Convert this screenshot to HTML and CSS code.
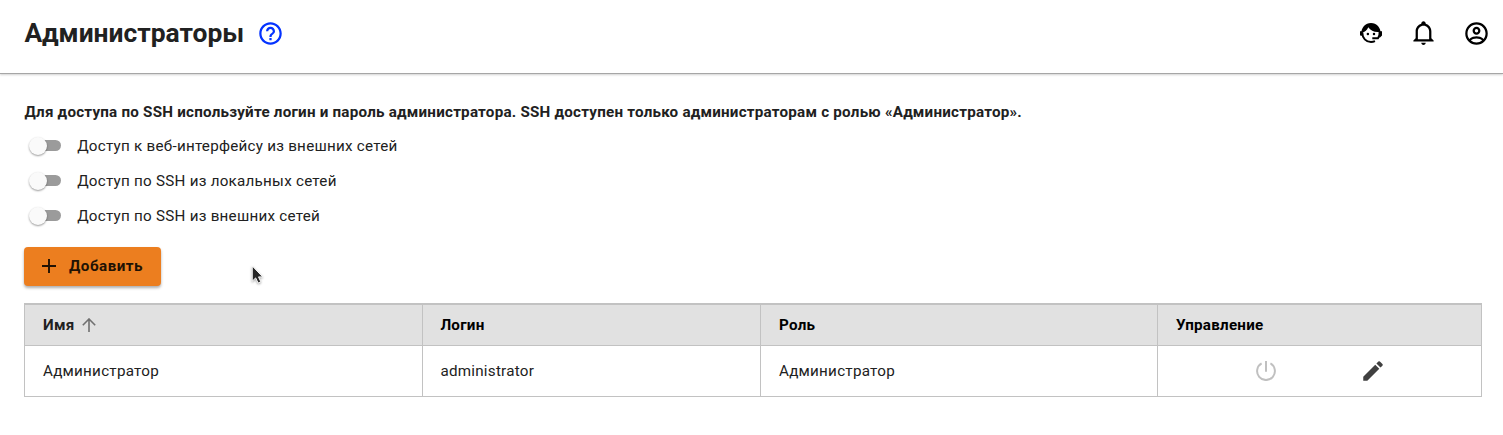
FILE: index.html
```html
<!DOCTYPE html>
<html lang="ru">
<head>
<meta charset="utf-8">
<title>Администраторы</title>
<link rel="stylesheet" href="styles.css">
</head>
<body>
<header class="topbar">
  <h1 class="title">Администраторы</h1>
  <svg class="icon help" viewBox="0 0 24 24"><path d="M11 18h2v-2h-2v2zm1-16C6.48 2 2 6.480 2 12s4.480 10 10 10 10-4.480 10-10S17.520 2 12 2zm0 18c-4.410 0-8-3.590-8-8s3.590-8 8-8 8 3.590 8 8-3.590 8-8 8zm0-14c-2.210 0-4 1.790-4 4h2c0-1.100.9-2 2-2s2 .9 2 2c0 2-3 1.750-3 5h2c0-2.250 3-2.500 3-5 0-2.210-1.790-4-4-4z"/></svg>
  <div class="actions">
    <svg class="icon agent" viewBox="0 0 26 26"><path d="M3.300 14C3 7.500 7.500 3 13 3S23 7.500 22.700 14L20.700 12C16.500 12.400 12.500 10.600 10.300 7.300C9 10.200 7 11.700 4.800 12.400Z"/><path class="line" d="M4.300 12.500C4.300 18 8 22 13 22C14.600 22 15.800 21.700 17 21.200M21.600 11.500C21.800 14.500 21.300 16.500 20 18.300H14.300"/><path d="M2 11.300H4.500V15.700H2.600L2 15ZM21.500 11.300H24V15.500L21.500 18Z"/><circle cx="9.900" cy="13.900" r="1.250"/><circle cx="16" cy="13.900" r="1.250"/></svg>
    <svg class="icon bell" viewBox="0 0 24 24"><path d="M10 21H14C14 22.1 13.1 23 12 23S10 22.1 10 21M21 19V20H3V19L5 17V11C5 7.9 7 5.200 10 4.300V4C10 2.900 10.900 2 12 2S14 2.900 14 4V4.300C17 5.200 19 7.900 19 11V17L21 19M17 11C17 8.200 14.800 6 12 6S7 8.200 7 11V18H17V11Z"/></svg>
    <svg class="icon" viewBox="0 0 24 24"><path d="M12,2A10,10 0 0,0 2,12A10,10 0 0,0 12,22A10,10 0 0,0 22,12A10,10 0 0,0 12,2M7.070,18.280C7.500,17.380 10.120,16.500 12,16.500C13.880,16.500 16.500,17.380 16.930,18.280C15.570,19.360 13.860,20 12,20C10.140,20 8.430,19.360 7.070,18.280M18.360,16.830C16.930,15.090 13.460,14.500 12,14.500C10.540,14.500 7.070,15.090 5.640,16.830C4.620,15.500 4,13.820 4,12C4,7.590 7.590,4 12,4C16.410,4 20,7.590 20,12C20,13.820 19.380,15.500 18.360,16.830M12,6C10.060,6 8.500,7.560 8.500,9.500C8.500,11.440 10.060,13 12,13C13.940,13 15.500,11.440 15.500,9.500C15.500,7.560 13.940,6 12,6M12,11A1.500,1.500 0 0,1 10.500,9.500A1.500,1.500 0 0,1 12,8A1.500,1.500 0 0,1 13.500,9.500A1.500,1.500 0 0,1 12,11Z"/></svg>
  </div>
</header>
<main class="content">
  <p class="notice">Для доступа по SSH используйте логин и пароль администратора. SSH доступен только администраторам с ролью «Администратор».</p>
  <div class="toggles">
    <label class="toggle"><span class="track"><span class="thumb"></span></span><span>Доступ к веб-интерфейсу из внешних сетей</span></label>
    <label class="toggle"><span class="track"><span class="thumb"></span></span><span>Доступ по SSH из локальных сетей</span></label>
    <label class="toggle"><span class="track"><span class="thumb"></span></span><span>Доступ по SSH из внешних сетей</span></label>
  </div>
  <button class="add"><svg class="plus" viewBox="0 0 14 14"><path d="M7 0V14M0 7H14"/></svg><span>Добавить</span></button>
  <table class="grid">
    <colgroup><col class="c1"><col class="c2"><col class="c3"><col class="c4"></colgroup>
    <thead>
      <tr><th class="sorted">Имя<svg class="sort" viewBox="0 0 14 14"><path d="M7 14V1.200M.8 7.200L7 1L13.200 7.200"/></svg></th><th>Логин</th><th>Роль</th><th>Управление</th></tr>
    </thead>
    <tbody>
      <tr><td>Администратор</td><td>administrator</td><td>Администратор</td>
        <td class="controls"><div class="buttons">
          <svg class="power" viewBox="0 0 20 20"><path d="M10 0V10.700M5.600 2.400A8.900 8.900 0 1 0 14.400 2.400"/></svg>
          <svg class="edit" viewBox="0 0 24 24"><path d="M3 17.250V21h3.750L17.810 9.940l-3.750-3.750L3 17.250zM20.710 7.040a1 1 0 0 0 0-1.410l-2.340-2.340a1 1 0 0 0-1.410 0l-1.830 1.830 3.750 3.750 1.830-1.830z"/></svg>
        </div></td></tr>
    </tbody>
  </table>
</main>
<svg class="cursor" viewBox="0 0 12 20"><path d="M1 1V17L4.600 13.600L7.200 19L10 17.700L7.600 12.500H12Z"/></svg>
</body>
</html>
```

FILE: styles.css
```css
* { box-sizing: border-box; }
body {
  margin: 0;
  height: 435px;
  overflow: hidden;
  background: #fff;
  color: #212121;
  font-family: Roboto, "Noto Sans", sans-serif;
  font-size: 15.2px;
  letter-spacing: 0.25px;
}
.topbar {
  display: flex;
  align-items: center;
  height: 74px;
  padding: 0 13px 7px 24.4px;
  border-bottom: 1px solid #a6a6a6;
  box-shadow: 0 1px 2px rgba(0, 0, 0, 0.18);
}
.title { margin: 0; font-size: 26.4px; font-weight: 700; line-height: 32px; letter-spacing: 0; }
.icon { width: 27px; height: 27px; fill: #000; flex: none; }
.help { margin-left: 12.6px; fill: #0433ff; }
.actions { display: flex; align-items: center; gap: 26px; margin-left: auto; }
.agent { width: 26px; height: 26px; }
.agent .line { fill: none; stroke: #000; stroke-width: 1.9; }
.bell { margin-top: -1px; margin-left: -0.5px; margin-right: 0.5px; }
.content { padding: 28px 21px 0 24px; }
.notice { margin: 0 0 0 0.4px; font-weight: 700; line-height: 20px; letter-spacing: 0.225px; }
.toggles { display: flex; flex-direction: column; padding: 6px 0 0 7px; }
.toggle { display: flex; align-items: center; gap: 16.2px; height: 35px; }
.track { position: relative; width: 30px; height: 11px; border-radius: 6px; background: #9b9b9b; }
.thumb {
  position: absolute;
  left: -2.5px;
  top: -3.5px;
  width: 18px;
  height: 18px;
  border-radius: 50%;
  background: #fafafa;
  box-shadow: 0 1px 2px rgba(0, 0, 0, 0.4);
}
.add {
  display: flex;
  align-items: center;
  gap: 13px;
  width: 137px;
  height: 39px;
  margin: 14px 0 17px;
  padding: 0 0 1px 18px;
  border: 0;
  border-radius: 4px;
  background: #ec7e1f;
  color: #211204;
  box-shadow: 0 2px 3px rgba(0, 0, 0, 0.32);
  font: inherit;
  font-weight: 700;
  letter-spacing: 0.5px;
}
.plus { width: 14px; height: 14px; stroke: #211204; stroke-width: 1.9; fill: none; }
.grid { width: 1458px; table-layout: fixed; border-collapse: collapse; }
.c1 { width: 398px; }
.c2 { width: 338px; }
.c3 { width: 397px; }
.grid th, .grid td { padding: 0 18px; border: 1px solid #c2c2c2; text-align: left; }
.grid th { height: 41px; border-top-width: 2px; background: #e1e1e1; color: #000; }
.grid th.sorted { color: #212121; }
.grid td { height: 51px; }
.grid th:nth-child(2), .grid td:nth-child(2) { padding-left: 17.4px; }
.sort { width: 14px; height: 14px; margin-left: 8px; vertical-align: -2px; fill: none; stroke: #707070; stroke-width: 1.6; }
.buttons { display: flex; align-items: center; padding-left: 80px; }
.power { width: 20px; height: 20px; fill: none; stroke: #c0c0c0; stroke-width: 2; }
.edit { width: 26px; height: 26px; margin-left: 84px; fill: #404040; }
.cursor {
  position: absolute;
  left: 251px;
  top: 265px;
  width: 12px;
  height: 19px;
  overflow: visible;
  fill: #262626;
  stroke: #fff;
  stroke-width: 1;
  filter: drop-shadow(0 1px 1px rgba(0, 0, 0, 0.35));
}
```
